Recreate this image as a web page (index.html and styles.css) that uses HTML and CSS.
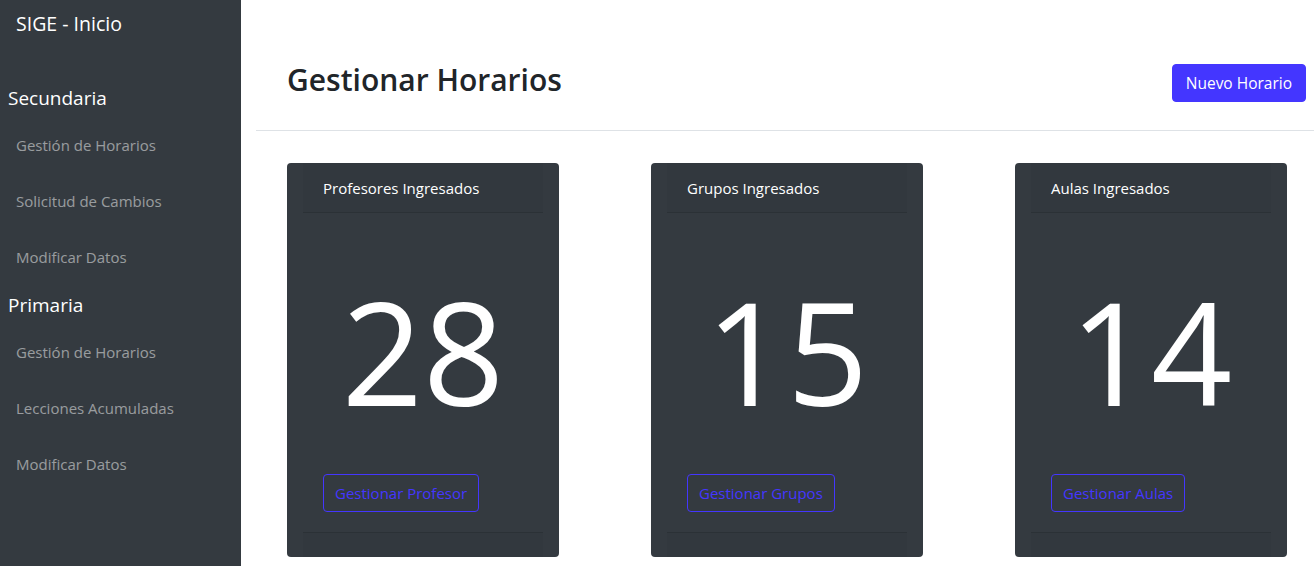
FILE: index.html
```html
<!DOCTYPE html>
<html lang="es">
<head>
<meta charset="utf-8">
<title>SIGE - Inicio</title>
<link rel="stylesheet" href="styles.css">
</head>
<body>
<div class="layout">
  <aside class="sidebar">
    <div class="brand">SIGE - Inicio</div>
    <nav class="nav">
      <div class="section">Secundaria</div>
      <a class="link" href="#">Gestión de Horarios</a>
      <a class="link" href="#">Solicitud de Cambios</a>
      <a class="link" href="#">Modificar Datos</a>
      <div class="section">Primaria</div>
      <a class="link" href="#">Gestión de Horarios</a>
      <a class="link" href="#">Lecciones Acumuladas</a>
      <a class="link" href="#">Modificar Datos</a>
    </nav>
  </aside>
  <main class="main">
    <header class="page-head">
      <h1 class="title">Gestionar Horarios</h1>
      <button class="btn-primary">Nuevo Horario</button>
    </header>
    <section class="cards">
      <div class="card">
        <div class="card-header">Profesores Ingresados</div>
        <div class="card-body">
          <div class="number">28</div>
          <button class="btn-outline">Gestionar Profesor</button>
        </div>
        <div class="card-footer"></div>
      </div>
      <div class="card">
        <div class="card-header">Grupos Ingresados</div>
        <div class="card-body">
          <div class="number">15</div>
          <button class="btn-outline">Gestionar Grupos</button>
        </div>
        <div class="card-footer"></div>
      </div>
      <div class="card">
        <div class="card-header">Aulas Ingresados</div>
        <div class="card-body">
          <div class="number">14</div>
          <button class="btn-outline">Gestionar Aulas</button>
        </div>
        <div class="card-footer"></div>
      </div>
    </section>
  </main>
</div>
</body>
</html>
```

FILE: styles.css
```css
* { box-sizing: border-box; }
html, body { margin: 0; padding: 0; height: 100%; }
body {
  font-family: "Open Sans", "Noto Sans", sans-serif;
  background: #fff;
  color: #212529;
  overflow: hidden;
}
.layout { display: flex; height: 566px; }

.sidebar {
  width: 241px;
  flex: 0 0 241px;
  background: #343a40;
  color: #fff;
}
.brand {
  font-size: 19.5px;
  line-height: 24px;
  padding: 12px 16px 0 16px;
  height: 84px;
}
.nav { display: flex; flex-direction: column; }
.section {
  font-size: 19px;
  line-height: 28px;
  padding-left: 8px;
  height: 28px;
  margin-bottom: 5px;
}
.link + .section { margin-top: 6px; }
.link {
  display: block;
  color: rgba(255, 255, 255, 0.5);
  text-decoration: none;
  font-size: 15px;
  line-height: 24px;
  padding: 16px 16px;
  height: 56px;
}

.main { flex: 1; padding-left: 15px; }
.page-head {
  height: 131px;
  border-bottom: 1px solid #dee2e6;
  display: flex;
  align-items: center;
  justify-content: space-between;
  padding: 30px 8px 0 31px;
}
.title {
  margin: 0;
  font-size: 30px;
  font-weight: 600;
  line-height: 36px;
  color: #212529;
}
.btn-primary {
  font-family: inherit;
  background: #4436ff;
  color: #fff;
  border: 1px solid #4436ff;
  border-radius: 4px;
  font-size: 15.5px;
  line-height: 24px;
  padding: 6px 13px;
  height: 38px;
  margin-top: 6px;
}

.cards {
  display: flex;
  gap: 92px;
  padding: 32px 0 0 31px;
}
.card {
  width: 272px;
  height: 394px;
  background: #343a40;
  border-radius: 4px;
  display: flex;
  flex-direction: column;
  color: #fff;
}
.card-header {
  margin: 0 16px;
  padding: 13px 20px 12px;
  font-size: 15px;
  line-height: 24px;
  height: 50px;
  background: rgba(0, 0, 0, 0.03);
  border-bottom: 1px solid rgba(0, 0, 0, 0.125);
}
.card-body {
  flex: 1;
  padding: 20px 36px 20px;
  display: flex;
  flex-direction: column;
  align-items: flex-start;
}
.number {
  align-self: stretch;
  text-align: center;
  font-size: 142px;
  line-height: 1;
  margin-top: 47px;
  font-weight: 400;
}
.btn-outline {
  font-family: inherit;
  margin-top: auto;
  background: transparent;
  color: #4436ff;
  border: 1px solid #4436ff;
  border-radius: 4px;
  font-size: 15px;
  line-height: 24px;
  padding: 6px 11px;
  height: 38px;
}
.card-footer {
  margin: 0 16px;
  height: 25px;
  background: rgba(0, 0, 0, 0.03);
  border-top: 1px solid rgba(0, 0, 0, 0.125);
}
```
